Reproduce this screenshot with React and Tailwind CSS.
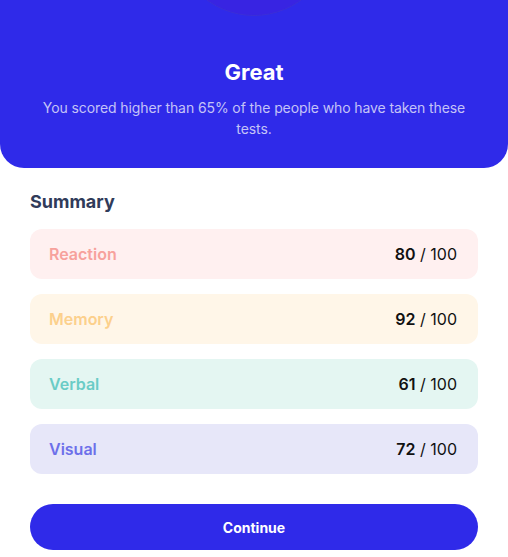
import React from 'react';

const items = [
  { label: 'Reaction', score: 80, bg: 'bg-[#fff0f0]', text: 'text-[#f7a19c]' },
  { label: 'Memory', score: 92, bg: 'bg-[#fff6e8]', text: 'text-[#fcd08c]' },
  { label: 'Verbal', score: 61, bg: 'bg-[#e4f6f2]', text: 'text-[#6accc6]' },
  { label: 'Visual', score: 72, bg: 'bg-[#e7e7f9]', text: 'text-[#6d70ea]' },
];

export default function App() {
  return (
    <div className="min-h-[557px] bg-white font-['Inter',sans-serif]">
      {/* Result header */}
      <div className="relative overflow-hidden bg-[#2f2ae9] rounded-b-[24px] h-[168px] flex flex-col items-center pt-[56px]">
        <div className="absolute left-1/2 -translate-x-1/2 -top-[144px] w-[160px] h-[160px] rounded-full bg-[#3824e2] border border-[#3b2fd8]"></div>
        <h1 className="text-white text-[22px] font-bold leading-[32px]">Great</h1>
        <p className="mt-[9px] text-[#c4c3f7] text-[14px] leading-[21px] text-center px-[24px] tracking-[-0.1px]">
          You scored higher than 65% of the people who have taken these tests.
        </p>
      </div>

      <div className="px-[30px] pt-[22px] pb-[8px]">
        <h2 className="text-[#303b5a] text-[18px] font-bold leading-[24px]">Summary</h2>
        <div className="mt-[15px] flex flex-col gap-[15px]">
          {items.map((item) => (
            <div
              key={item.label}
              className={`${item.bg} h-[50px] rounded-xl flex items-center justify-between pl-[19px] pr-[21px]`}
            >
              <span className={`${item.text} text-[16px] font-semibold`}>{item.label}</span>
              <span className="text-[16px] text-[#111]">
                <span className="font-semibold">{item.score}</span> / 100
              </span>
            </div>
          ))}
        </div>
        <button className="mt-[30px] w-full h-[46px] rounded-full bg-[#2f2ae9] text-white text-[14px] font-bold">
          Continue
        </button>
      </div>
    </div>
  );
}
